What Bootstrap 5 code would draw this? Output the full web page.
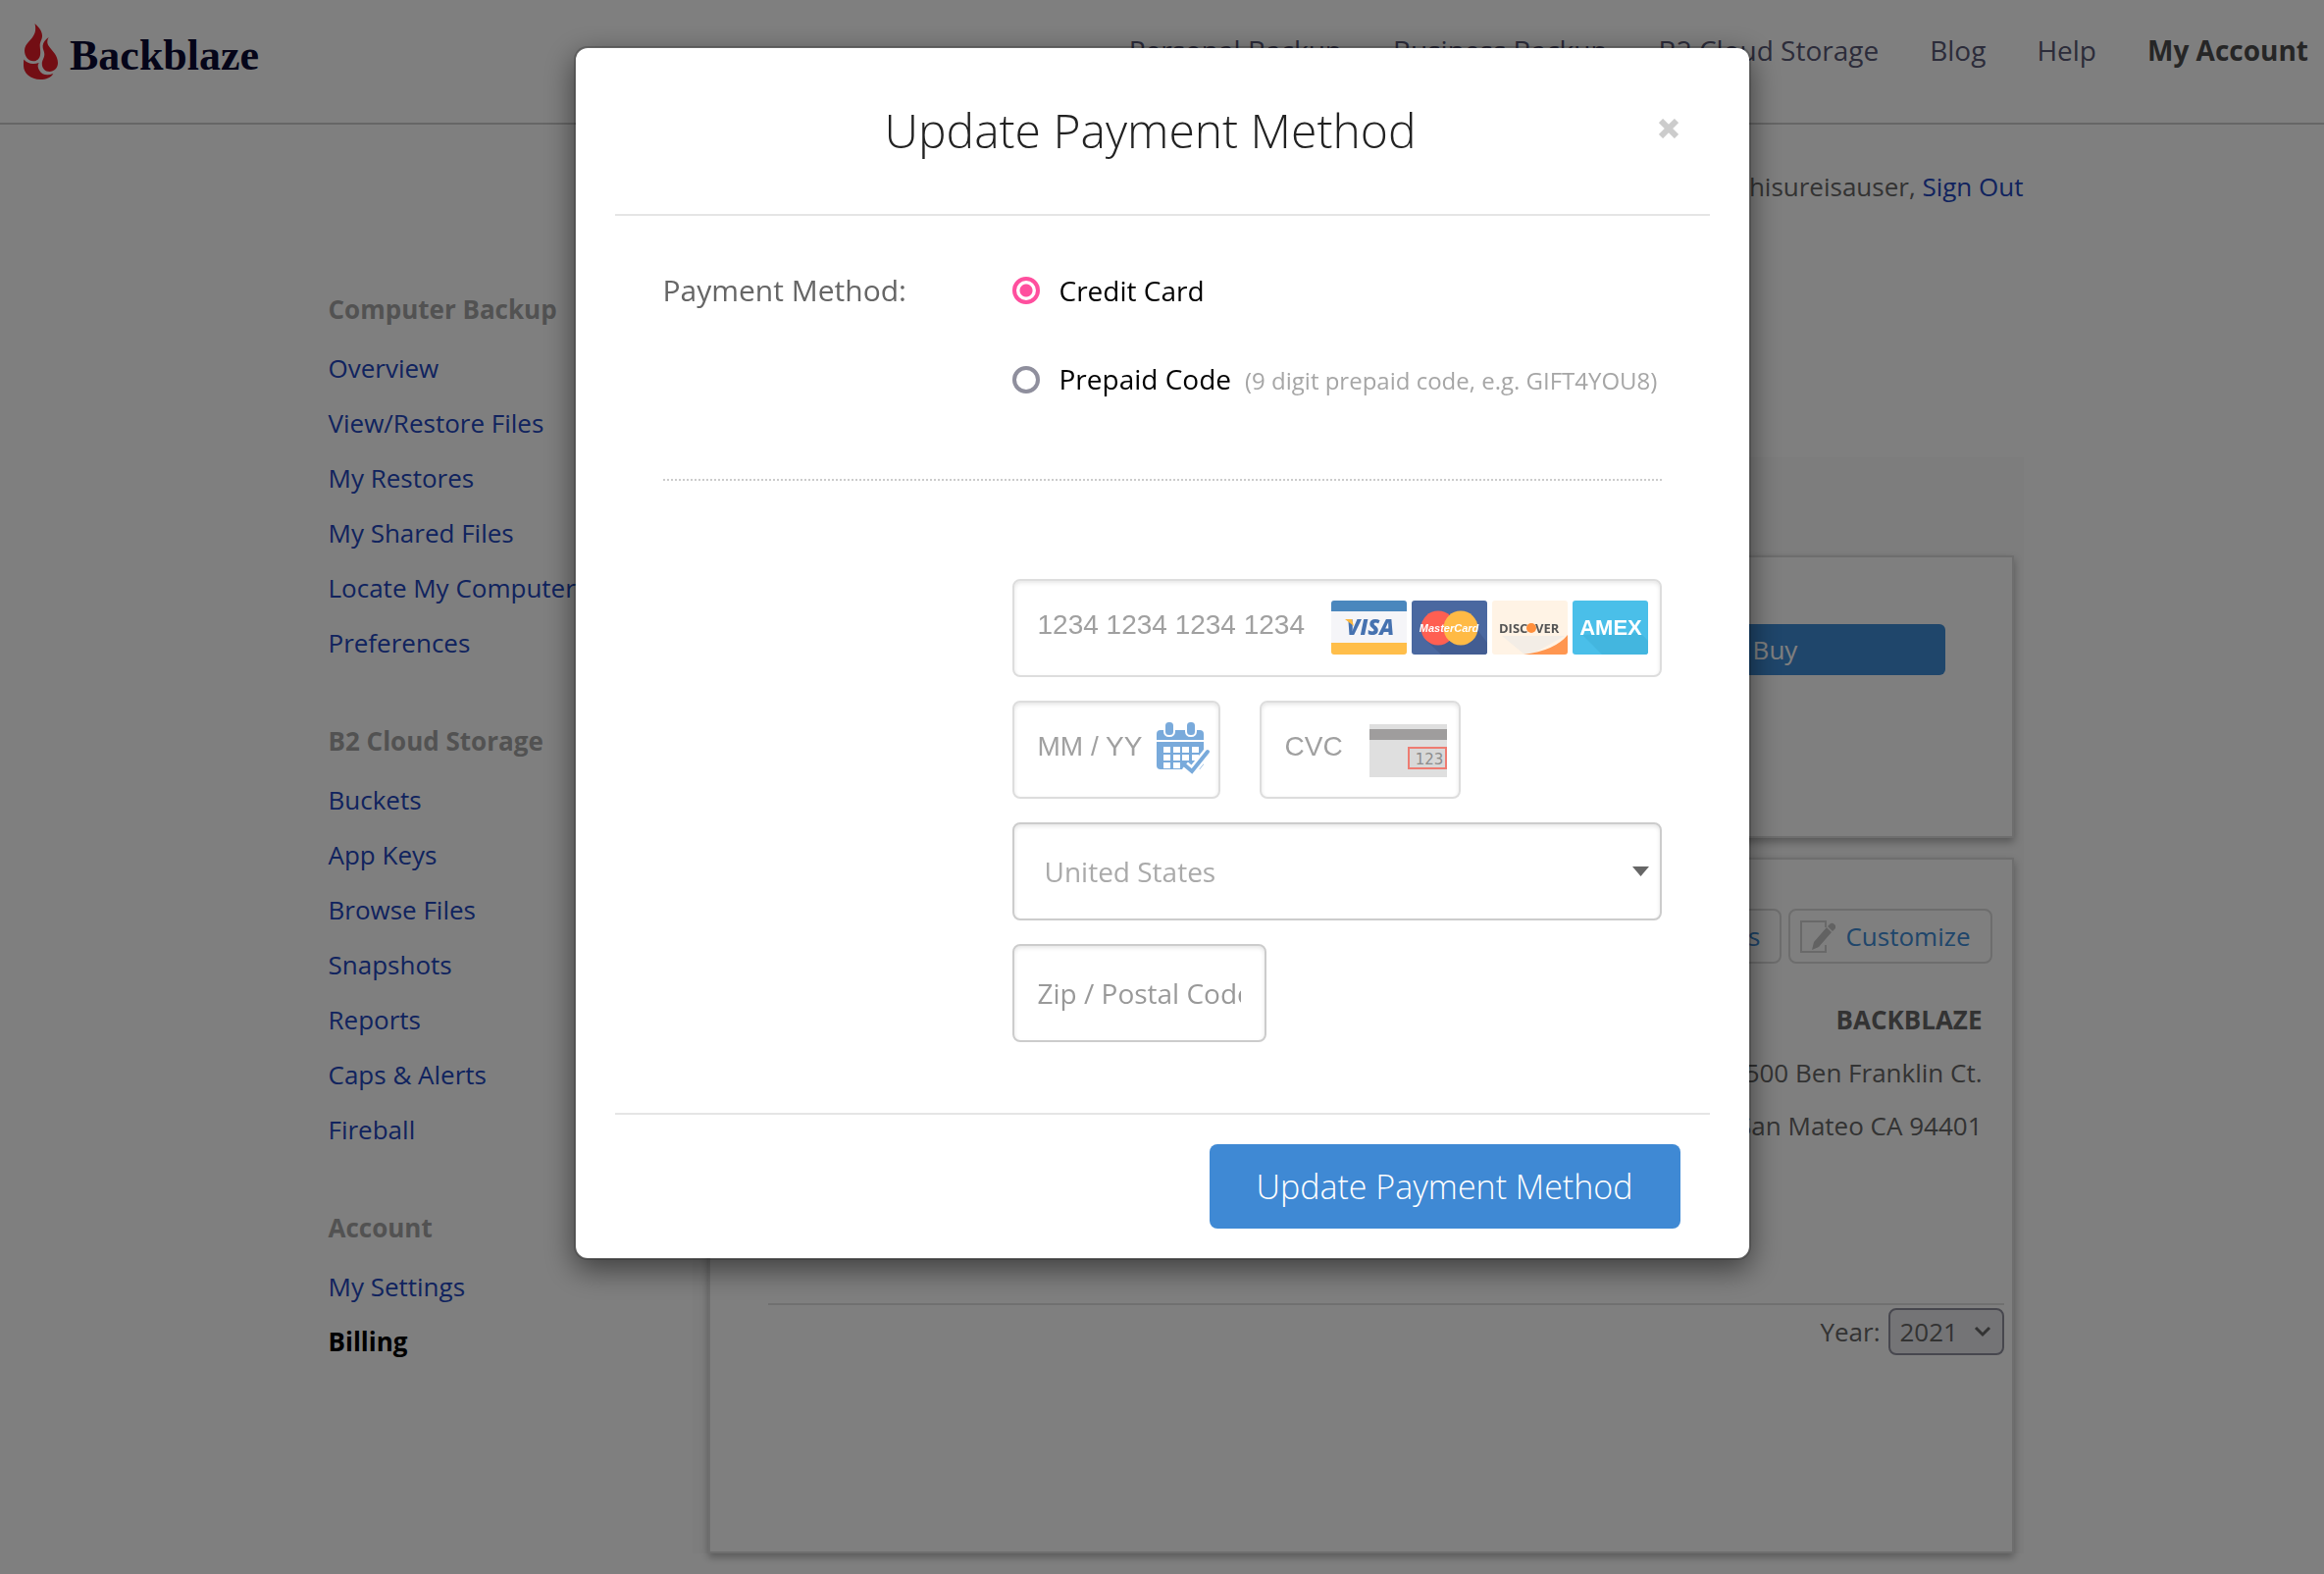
<!DOCTYPE html>
<html lang="en">
<head>
<meta charset="utf-8">
<meta name="viewport" content="width=device-width, initial-scale=1">
<title>Backblaze - Billing</title>
<link href="https://cdn.jsdelivr.net/npm/bootstrap@5.3.0/dist/css/bootstrap.min.css" rel="stylesheet">
<style>
  body { font-family: "Open Sans", "Noto Sans", sans-serif; font-size: 26px; color: #666; background: #fff; }
  a { color: #2246bc; text-decoration: none; }

  .site-header { padding: 24px 16px 44px 24px; border-bottom: 2px solid #ccc; }
  .wordmark { font-family: "Liberation Serif", serif; font-weight: 700; font-size: 44px; line-height: 48px; color: #0a0a33; }
  .site-nav { gap: 52px; font-size: 28px; line-height: 40px; }
  .site-nav a { color: #585875; }
  .site-nav a.current { color: #4c4c4c; font-weight: 700; }

  .page-wrap { max-width: 1756px; }
  .greeting { margin-top: 37px; line-height: 52px; }
  .side-nav { width: 399px; padding-left: 28px; margin-top: 71px; line-height: 56px; }
  .side-nav h2 { font-size: 26px; line-height: 56px; font-weight: 700; color: #a5a5a5; margin: 44px 0 4px; }
  .side-nav h2:first-child { margin-top: 0; }
  .side-nav a.current { color: #000; font-weight: 700; }

  .panel-area { margin: 250px 0 21px; padding: 100px 10px 0 16px; background: #fafafa; }
  .panel-box { border: 2px solid #dcdcdc; background: #fff; box-shadow: 0 4px 8px rgba(0, 0, 0, .3); }
  .plan-box { padding: 68px 68px 164px; margin-bottom: 20px; }
  .receipt-box { padding: 50px 8px 200px 59px; }
  .btn-buy { width: 346px; height: 52px; padding: 0; font-size: 26px; color: #fff; background: #3e8cd6; border: 0; border-radius: 6px; }
  .tool-row { gap: 7px; padding-right: 12px; }
  .btn-tool { height: 56px; padding: 0 20px 0 10px; gap: 10px; font-size: 26px; line-height: 52px; color: #3e8cd6; border: 2px solid #dadada; border-radius: 8px; }
  .seller { line-height: 54px; margin: 30px 0 154px; padding-right: 22px; }
  .year-row { border-top: 2px solid #e0e0e0; padding-top: 3px; gap: 8px; }
  .year-pick { width: 118px; height: 48px; padding: 0 10px; font-size: 26px; line-height: 44px; color: #666; border: 2px solid #8f8f9d; border-radius: 8px;
    background: #e9e9ed url("data:image/svg+xml,%3Csvg xmlns='http://www.w3.org/2000/svg' viewBox='0 0 18 12'%3E%3Cpath d='M2 2l7 7 7-7' fill='none' stroke='%23666' stroke-width='3'/%3E%3C/svg%3E") no-repeat right 11px center / 18px 12px; }

  .modal-backdrop { --bs-backdrop-opacity: .5; }
  .pay-dialog { max-width: 1200px; margin-top: 47px; }
  .pay-dialog .modal-content { border: 2px solid rgba(0, 0, 0, .2); border-radius: 14px; background-clip: padding-box; box-shadow: 0 10px 30px rgba(0, 0, 0, .5); }
  .pay-head { margin: 0 40px; padding: 54px 30px 55px; border-bottom: 2px solid #e5e5e5; }
  .pay-head h1 { font-weight: 300; font-size: 48px; line-height: 60px; color: #222; }
  .close-x { width: 24px; height: 24px; color: #ccc; }
  .pay-body { padding: 46px 89px 72px; }
  .side-label { width: 356px; font-size: 30px; line-height: 60px; }
  .pick-list { gap: 30px; font-size: 28px; line-height: 60px; color: #000; }
  .pick-list .form-check-input { width: 28px; height: 28px; margin: 0 20px 0 0; border: 4px solid #8f8f9d; }
  .pick-list .form-check-input:checked { border-color: #ff4f9e; background: radial-gradient(circle, #ff4f9e 0 6px, #fff 7px); }
  .pick-hint { font-size: 24px; color: #a6a6a6; margin-left: 14px; }
  .dotted-rule { border-top: 2px dotted #ccc; margin: 70px 0 100px; }
  .field-col { margin-left: 356px; gap: 24px; }
  .pay-field { height: 100px; padding: 0 24px; font-size: 28px; color: #666; border: 2px solid #ccc; border-radius: 8px; box-shadow: inset 0 2px 4px rgba(0, 0, 0, .1); }
  .pay-field::placeholder { color: #999; opacity: 1; }
  .stripe-field { font-family: "Liberation Sans", sans-serif; border-color: #ddd; padding-bottom: 7px; }
  .stripe-field::placeholder { color: #a0a0a0; }
  .split-row { gap: 40px; }
  .date-wrap { width: 212px; }
  .cvc-wrap { width: 205px; }
  .zip-field { width: 259px; }
  .country-field { padding: 0 31px; color: #aaa;
    background: #fff url("data:image/svg+xml,%3Csvg xmlns='http://www.w3.org/2000/svg' viewBox='0 0 17 10'%3E%3Cpath d='M0 0h17l-8.5 10z' fill='%23666'/%3E%3C/svg%3E") no-repeat right 11px center / 17px 10px; }
  .field-art { position: absolute; top: 22px; }
  .brand-art { right: 14px; gap: 5px; }
  .cal-art { right: 10px; }
  .cvc-art { right: 14px; top: 24px; }
  .pay-foot { margin: 0 40px; padding: 30px; border-top: 2px solid #e5e5e5; }
  .btn-pay { width: 480px; height: 86px; padding: 0; font-weight: 300; font-size: 34px; color: #fff; background: #3f89d4; border: 0; border-radius: 8px; }
</style>
</head>
<body>
<header class="site-header d-flex justify-content-between align-items-center">
  <a href="#" class="d-flex align-items-center" aria-label="Backblaze">
    <svg width="35" height="57" viewBox="0 0 35 57" fill="#e61c28" aria-hidden="true">
      <path d="M11.500 0C16 4 19 8 19 12.500C19 17 16.500 18 16.700 23C17 27 17.500 29 17 32C16.300 36 13.500 38.300 10 38.300C5 38.300 1 33.500 1 27.500C1 20 9 17 11.500 9.500C12.500 6.500 12.300 3 11.500 0Z"/>
      <path d="M25.600 14C23.500 18 24 21 26.500 24C30 28.500 35 33 35 40C35 45.500 31 49 26.500 49C22 49 18.800 45.500 18.800 41C18.800 37 21.300 35.500 21.300 31C21.300 28 19.300 26 19.600 22.500C20 19 22.500 16 25.600 14Z"/>
      <path d="M.400 36.500C3.500 40.500 9 42.500 15.700 40C14 42 14.500 45 16 47.500C19 52.500 24 53.500 30.300 51C28 55 23 57 17.200 57C7 57 0 50.500 0 43C0 40.500 0 38.500 .400 36.500Z"/>
    </svg>
    <span class="wordmark ms-2 ps-1 pt-2">Backblaze</span>
  </a>
  <nav class="site-nav d-flex pb-1">
    <a href="#">Personal Backup</a>
    <a href="#">Business Backup</a>
    <a href="#">B2 Cloud Storage</a>
    <a href="#">Blog</a>
    <a href="#">Help</a>
    <a href="#" class="current">My Account</a>
  </nav>
</header>

<div class="page-wrap mx-auto">
  <div class="greeting text-end">thisureisauser, <a href="#">Sign Out</a></div>
  <div class="d-flex align-items-start">
    <nav class="side-nav d-flex flex-column flex-shrink-0">
      <h2>Computer Backup</h2>
      <a href="#">Overview</a>
      <a href="#">View/Restore Files</a>
      <a href="#">My Restores</a>
      <a href="#">My Shared Files</a>
      <a href="#">Locate My Computer</a>
      <a href="#">Preferences</a>
      <h2>B2 Cloud Storage</h2>
      <a href="#">Buckets</a>
      <a href="#">App Keys</a>
      <a href="#">Browse Files</a>
      <a href="#">Snapshots</a>
      <a href="#">Reports</a>
      <a href="#">Caps &amp; Alerts</a>
      <a href="#">Fireball</a>
      <h2>Account</h2>
      <a href="#">My Settings</a>
      <a href="#" class="current">Billing</a>
    </nav>
    <main class="panel-area flex-grow-1">
      <section class="panel-box plan-box d-flex justify-content-end">
        <button type="button" class="btn btn-buy">Buy</button>
      </section>
      <section class="panel-box receipt-box">
        <div class="tool-row d-flex justify-content-end">
          <button type="button" class="btn btn-tool d-flex align-items-center">Receipts</button>
          <button type="button" class="btn btn-tool d-flex align-items-center">
            <svg width="36" height="36" viewBox="0 0 36 36" aria-hidden="true">
              <path d="M26 9V3H1v31h25v-7" fill="none" stroke="#d2d2d2" stroke-width="2"/>
              <path d="M12 32l2-8L27 9l5 5-13 15zM28 8l3-3q2-1 4 1t1 4l-3 3z" fill="#c4c4c4"/>
            </svg>
            Customize
          </button>
        </div>
        <address class="seller text-end">
          <strong>BACKBLAZE</strong><br>500 Ben Franklin Ct.<br>San Mateo CA 94401
        </address>
        <div class="year-row d-flex justify-content-end align-items-center">
          <label for="year">Year:</label>
          <select id="year" class="form-select year-pick"><option>2021</option></select>
        </div>
      </section>
    </main>
  </div>
</div>

<div class="modal-backdrop show"></div>
<div class="modal d-block" tabindex="-1" role="dialog" aria-labelledby="payTitle">
  <div class="modal-dialog pay-dialog">
    <form class="modal-content">
      <div class="pay-head d-flex align-items-center">
        <h1 id="payTitle" class="flex-grow-1 text-center m-0">Update Payment Method</h1>
        <button type="button" class="close-x d-flex align-items-start justify-content-center border-0 bg-transparent p-0" aria-label="Close">
          <svg width="20" height="20" viewBox="0 0 20 20" aria-hidden="true"><path d="M2 2l16 16M18 2L2 18" stroke="currentColor" stroke-width="6"/></svg>
        </button>
      </div>
      <div class="pay-body">
        <div class="d-flex">
          <div class="side-label" id="methodLabel">Payment Method:</div>
          <div class="pick-list d-flex flex-column" role="radiogroup" aria-labelledby="methodLabel">
            <div class="d-flex align-items-center">
              <input class="form-check-input" type="radio" name="method" id="mCard" checked>
              <label for="mCard">Credit Card</label>
            </div>
            <div class="d-flex align-items-center">
              <input class="form-check-input" type="radio" name="method" id="mCode">
              <label for="mCode">Prepaid Code<span class="pick-hint">(9 digit prepaid code, e.g. GIFT4YOU8)</span></label>
            </div>
          </div>
        </div>
        <div class="dotted-rule"></div>
        <div class="field-col d-flex flex-column">
          <div class="position-relative">
            <input class="form-control pay-field stripe-field" type="text" placeholder="1234 1234 1234 1234" aria-label="Card number">
            <div class="field-art brand-art d-flex" aria-hidden="true">
              <svg width="77" height="55" viewBox="0 0 77 55">
                <rect width="77" height="55" rx="3" fill="#f5f5f8"/>
                <path d="M0 11V3a3 3 0 0 1 3-3h71a3 3 0 0 1 3 3v8z" fill="#4a87bd"/>
                <path d="M0 43h77v9a3 3 0 0 1-3 3H3a3 3 0 0 1-3-3z" fill="#ffbe4a"/>
                <text x="40" y="35" text-anchor="middle" font-family="Open Sans, sans-serif" font-size="22" font-weight="800" font-style="italic" fill="#4672b0">VISA</text>
                <path d="M14 19h7l2 7z" fill="#fbb63c"/>
              </svg>
              <svg width="77" height="55" viewBox="0 0 77 55">
                <rect width="77" height="55" rx="3" fill="#4a68a0"/>
                <path d="M14 40l16 15h44a3 3 0 0 0 3-3V43L58 18z" fill="#435d92"/>
                <circle cx="27" cy="28" r="17.500" fill="#ff5f52"/>
                <circle cx="50" cy="28" r="17.500" fill="#ffba45"/>
                <text x="38" y="32" text-anchor="middle" font-family="Liberation Sans, sans-serif" font-size="11" font-weight="700" font-style="italic" fill="#fff">MasterCard</text>
              </svg>
              <svg width="77" height="55" viewBox="0 0 77 55">
                <rect width="77" height="55" rx="3" fill="#fff3e5"/>
                <path d="M10 36h64L42 54H32z" fill="#f3ede6"/>
                <path d="M77 35v17a3 3 0 0 1-3 3H32q32-4 45-20z" fill="#ff9650"/>
                <g font-family="Open Sans, sans-serif" font-size="13" font-weight="700" fill="#555">
                  <text x="7" y="33">DISC</text><text x="44" y="33">VER</text>
                </g>
                <circle cx="40" cy="28" r="5" fill="#ff8f3c"/>
              </svg>
              <svg width="77" height="55" viewBox="0 0 77 55">
                <rect width="77" height="55" rx="3" fill="#4abfe9"/>
                <path d="M10 35l20 20h44a3 3 0 0 0 3-3V41l-8-8z" fill="#43b6df"/>
                <text x="39" y="35" text-anchor="middle" font-family="Liberation Sans, sans-serif" font-size="22" font-weight="700" fill="#fff">AMEX</text>
              </svg>
            </div>
          </div>
          <div class="split-row d-flex">
            <div class="date-wrap position-relative">
              <input class="form-control pay-field stripe-field" type="text" placeholder="MM / YY" aria-label="Expiry date">
              <svg class="field-art cal-art" width="55" height="54" viewBox="0 0 55 54" aria-hidden="true">
                <path d="M0 18v-6q0-4 4-4h40q4 0 4 4v6z" fill="#79aadb"/>
                <path d="M0 20h48v23l-4 5H4q-4 0-4-4z" fill="#79aadb"/>
                <g fill="#79aadb" stroke="#fff" stroke-width="2"><rect x="8" y="-1" width="10" height="15" rx="4.500"/><rect x="30" y="-1" width="10" height="15" rx="4.500"/></g>
                <g fill="#fff">
                  <path d="M7 25h7v6H7zM17 25h7v6h-7zM26 25h7v6h-7zM36 25h7v6h-7z"/>
                  <path d="M7 33h7v6H7zM17 33h7v6h-7zM26 33h7v6h-7zM36 33h7v6h-7z"/>
                  <path d="M7 41h7v6H7zM17 41h7v6h-7z"/>
                </g>
                <path d="M29 44l7 6 16-20" fill="none" stroke="#fff" stroke-width="9"/>
                <path d="M29 44l7 6 16-20" fill="none" stroke="#79aadb" stroke-width="4" stroke-linecap="round"/>
              </svg>
            </div>
            <div class="cvc-wrap position-relative">
              <input class="form-control pay-field stripe-field" type="text" placeholder="CVC" aria-label="Security code">
              <svg class="field-art cvc-art" width="79" height="54" viewBox="0 0 79 54" aria-hidden="true">
                <rect width="79" height="54" fill="#dfdfdf"/>
                <rect y="5" width="79" height="11" fill="#9f9d9d"/>
                <rect x="40" y="24" width="38" height="21" fill="#d8d8d8" stroke="#ee7c72" stroke-width="2"/>
                <text x="61" y="41" text-anchor="middle" font-family="DejaVu Sans, sans-serif" font-size="15" fill="#8c8c8c">123</text>
              </svg>
            </div>
          </div>
          <select class="form-select pay-field country-field" aria-label="Country"><option>United States</option></select>
          <input class="form-control pay-field zip-field" type="text" placeholder="Zip / Postal Code" aria-label="Zip or postal code">
        </div>
      </div>
      <div class="pay-foot d-flex justify-content-end">
        <button type="button" class="btn btn-pay">Update Payment Method</button>
      </div>
    </form>
  </div>
</div>
<script src="https://cdn.jsdelivr.net/npm/bootstrap@5.3.0/dist/js/bootstrap.bundle.min.js"></script>
</body>
</html>
